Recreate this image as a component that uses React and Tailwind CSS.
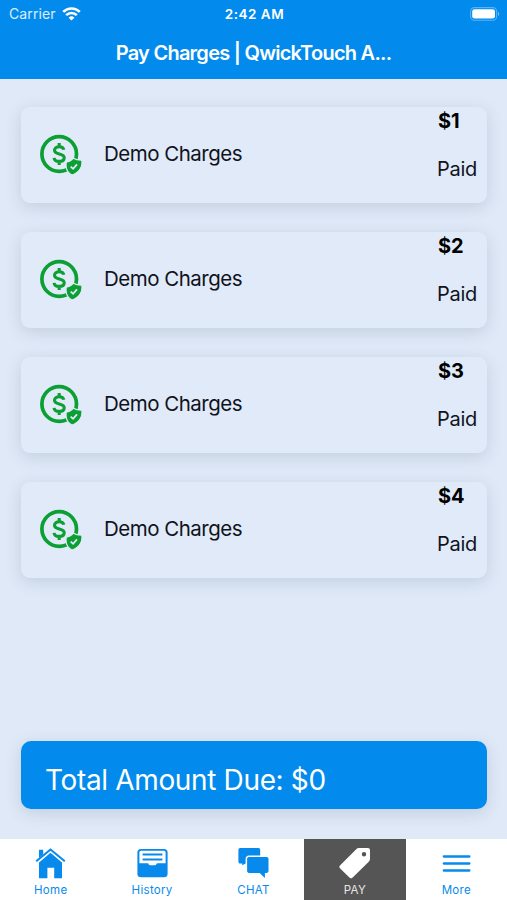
const charges = [
  { id: 1, title: "Demo Charges", amount: "$1", status: "Paid" },
  { id: 2, title: "Demo Charges", amount: "$2", status: "Paid" },
  { id: 3, title: "Demo Charges", amount: "$3", status: "Paid" },
  { id: 4, title: "Demo Charges", amount: "$4", status: "Paid" },
];

const WifiIcon = () => (
  <svg className="h-[14px] w-[19px]" viewBox="0 0 19 14" fill="none" stroke="white" strokeWidth="2.6">
    <path d="M1.2 4.9a11.8 11.8 0 0 1 16.6 0" />
    <path d="M4.2 8.2a7.5 7.5 0 0 1 10.6 0" />
    <path d="M9.5 13.6 6.6 10.7a4.1 4.1 0 0 1 5.8 0z" fill="white" stroke="none" />
  </svg>
);

const BatteryIcon = () => (
  <svg className="h-[14px] w-[30px]" viewBox="0 0 30 14">
    <rect x="0.6" y="0.6" width="26" height="12.6" rx="3.8" fill="none" stroke="white" strokeOpacity="0.35" strokeWidth="1.1" />
    <rect x="2.2" y="2.2" width="22.8" height="9.4" rx="2.4" fill="white" />
    <path d="M28 4.8c1.6.6 1.6 3.6 0 4.2z" fill="white" fillOpacity="0.45" />
  </svg>
);

const PaidIcon = () => (
  <svg className="h-[42px] w-[43px]" viewBox="0 0 43 42" fill="none">
    <circle cx="19.2" cy="20" r="17.3" stroke="#0c9f33" strokeWidth="3.7" />
    <path
      d="M23.8 15.8c-.4-2-2.2-3-4.6-3-2.7 0-4.7 1.200-4.700 3.500 0 5 9.700 2.300 9.700 7.400 0 2.400-2.100 3.700-5 3.700-2.800 0-4.900-1.300-5.100-3.600M19.200 9v3.800M19.200 27.400V31"
      stroke="#0c9f33"
      strokeWidth="3.1"
    />
    <path
      d="M26.300 28.200c2.800-.2 5.200-1.800 7.200-4 2.300 1.500 5 2 8.200 1.900 1.200 5.900-1.900 12.100-9.700 15-4.700-2.500-6.600-7.300-5.700-12.900z"
      fill="#0c9f33"
      stroke="#e0eaf8"
      strokeWidth="1.1"
      strokeLinejoin="round"
    />
    <path d="m30.700 32.600 2.400 2.200 3.900-4.500" stroke="#e0eaf8" strokeWidth="1.800" />
  </svg>
);

const HomeIcon = () => (
  <svg className="h-[31px] w-[31px]" viewBox="0 0 31 31" fill="#078aeb">
    <path d="M4 1.7h4.2v4.6L4 10.2z" />
    <path d="m1.2 13.300 14.300-11.800 14.300 11.800" fill="none" stroke="#078aeb" strokeWidth="2.100" />
    <path d="M15.500 4.800 27 14.500v15.700h-7.800V19.800h-6.800v10.400H4V14.500z" />
  </svg>
);

const HistoryIcon = () => (
  <svg className="h-[31px] w-[31px]" viewBox="0 0 31 31">
    <rect x="0.400" y="0.900" width="30.200" height="28.400" rx="3.600" fill="#078aeb" />
    <path d="M2.400 4.500c0-1 .8-1.800 1.800-1.800h22.600c1 0 1.800.8 1.800 1.800v10.800h-8.100c-.7 0-1 .4-1.200 1-.2.7-.6.9-1.200.9h-5.200c-.6 0-1-.2-1.200-.9-.2-.6-.5-1-1.200-1H2.400z" fill="white" />
    <path d="M5.600 6.500h19.800M5.600 11.500h19.800" stroke="#078aeb" strokeWidth="2" />
  </svg>
);

const ChatIcon = () => (
  <svg className="h-[31px] w-[31px]" viewBox="0 0 31 31" fill="#078aeb">
    <path d="M2.200 0h18.200c1 0 1.800.8 1.800 1.800v5.600H11c-2 0-3.400 1.400-3.400 3.400v4.800l-3.400 1.600v-1.700h-2c-1 0-1.800-.8-1.800-1.800V1.800C.4.800 1.200 0 2.200 0z" />
    <path d="M11 8.900h17.600c1.100 0 1.900.8 1.900 1.900v12.300c0 1.100-.8 1.900-1.900 1.900h-1.700v5l-5.200-5H11c-1.100 0-1.900-.8-1.900-1.900V10.800c0-1.100.8-1.900 1.900-1.900z" />
  </svg>
);

const TagIcon = () => (
  <svg className="h-[31px] w-[31px]" viewBox="0 0 31 31" fill="white">
    <path
      fillRule="evenodd"
      d="M19.800 0h8.800C30.200 0 31 .8 31 2.400v8.700c0 1-.3 1.800-1 2.500L13.700 29.600c-1.100 1.100-2.200 1.100-3.300 0L1.200 20.500c-1.100-1.100-1.100-2.200 0-3.300L17.500 1c.6-.7 1.300-1 2.300-1zM25 4a2.200 2.200 0 1 0 0 4.400A2.200 2.200 0 0 0 25 4z"
    />
  </svg>
);

const MenuIcon = () => (
  <svg className="h-[31px] w-[31px]" viewBox="0 0 31 31" fill="none" stroke="#078aeb" strokeWidth="2.300" strokeLinecap="round">
    <path d="M2.800 8.500h25.600M2.800 15.500h25.600M2.800 22.500h25.600" />
  </svg>
);

const tabs = [
  { label: "Home", icon: HomeIcon },
  { label: "History", icon: HistoryIcon },
  { label: "CHAT", icon: ChatIcon },
  { label: "PAY", icon: TagIcon, active: true },
  { label: "More", icon: MenuIcon },
];

const ChargeCard = ({ charge }) => (
  <article className="flex h-24 rounded-[9px] bg-[#e0eaf8] pl-[19px] shadow-[0_4px_16px_rgba(70,90,110,0.18)]">
    <div className="flex w-16 shrink-0 items-center">
      <PaidIcon />
    </div>
    <h2 className="mt-[35px] flex-1 text-[20.5px] leading-6 tracking-[-0.5px] whitespace-nowrap text-[#10131c]">
      {charge.title}
    </h2>
    <div className="w-[50px] text-[20px] leading-6 whitespace-nowrap text-[#10131c]">
      <p className="mt-0.5 pl-px font-bold text-black">{charge.amount}</p>
      <p className="mt-6 tracking-[-0.25px]">{charge.status}</p>
    </div>
  </article>
);

export default function App() {
  return (
    <div className="flex h-[900px] w-[507px] flex-col overflow-hidden bg-[#dfe9f8] font-['Inter',sans-serif]">
      <header className="h-[79px] shrink-0 bg-[#028bec] text-white">
        <div className="grid h-7 grid-cols-[1fr_auto_1fr] items-center pr-[7px] pl-[9px] text-[13.5px]">
          <div className="flex items-center gap-[6px] pb-px">
            <span className="text-[14px] tracking-[0.1px] text-white/85">Carrier</span>
            <WifiIcon />
          </div>
          <span className="font-semibold tracking-[0.5px]">2:42 AM</span>
          <div className="flex justify-end pb-px">
            <BatteryIcon />
          </div>
        </div>
        <h1 className="mt-[13px] text-center text-[20px] leading-6 font-semibold tracking-[-0.75px]">
          Pay Charges | QwickTouch A...
        </h1>
      </header>

      <main className="flex flex-1 flex-col pt-7 pr-5 pb-[30px] pl-[21px]">
        <div className="flex flex-col gap-[29px]">
          {charges.map((charge) => (
            <ChargeCard key={charge.id} charge={charge} />
          ))}
        </div>
        <div className="mt-auto flex h-[68px] items-center rounded-[10px] bg-[#028bec] pt-2.5 pl-6 text-[28px] tracking-[-0.35px] whitespace-nowrap text-white shadow-[0_4px_16px_rgba(70,90,110,0.18)]">
          Total Amount Due: $0
        </div>
      </main>

      <nav className="grid h-[61px] shrink-0 grid-cols-5 bg-white">
        {tabs.map(({ label, icon: Icon, active }) => (
          <button
            key={label}
            className={`flex flex-col items-center pt-[9px] text-[11.5px] leading-[14px] tracking-[0.3px] ${
              active ? "bg-[#555] text-white/85" : "text-[#078aeb]"
            }`}
          >
            <Icon />
            <span className="mt-[4px]">{label}</span>
          </button>
        ))}
      </nav>
    </div>
  );
}
